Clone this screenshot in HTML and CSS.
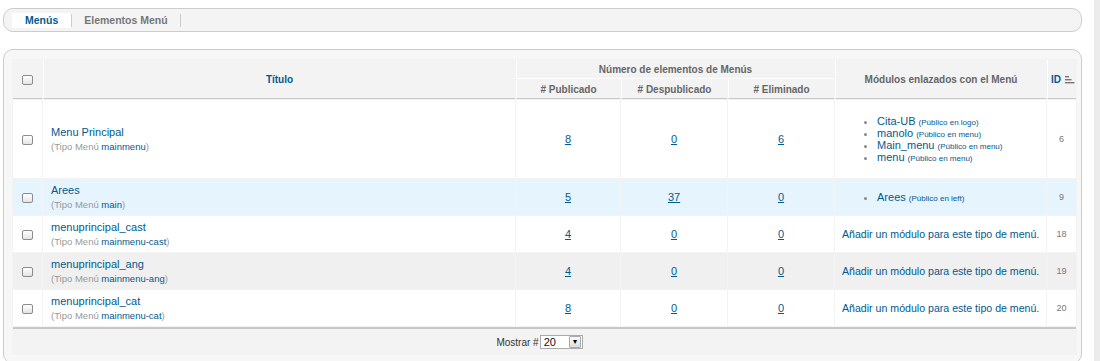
FILE: index.html
```html
<!DOCTYPE html>
<html>
<head lang="es">
    <meta charset="UTF-8">
    <title>Menús</title>
    <link rel="stylesheet" href="styles.css">
</head>
<body>

<div id="submenu-box">
    <ul id="submenu">
        <li><a class="active" href="#">Menús</a></li>
        <li><a href="#">Elementos Menú</a></li>
    </ul>
</div>

<div id="element-box">
    <table class="adminlist">
        <colgroup>
            <col style="width:29px">
            <col style="width:472px">
            <col style="width:104px">
            <col style="width:106px">
            <col style="width:106px">
            <col style="width:211px">
            <col style="width:29px">
        </colgroup>
        <thead>
        <tr>
            <th rowspan="2"><input type="checkbox" class="cb"></th>
            <th rowspan="2"><a href="#">Título</a></th>
            <th colspan="3" class="group">Número de elementos de Menús</th>
            <th rowspan="2">Módulos enlazados con el Menú</th>
            <th rowspan="2" class="id"><a href="#">ID</a>
                <svg class="sort" width="10" height="8" viewBox="0 0 10 8">
                    <rect x="0" y="0" width="4" height="1.4" fill="#777"/>
                    <rect x="0" y="3" width="6.5" height="1.4" fill="#777"/>
                    <rect x="0" y="6" width="9.5" height="1.4" fill="#777"/>
                </svg>
            </th>
        </tr>
        <tr>
            <th class="sub"># Publicado</th>
            <th class="sub"># Despublicado</th>
            <th class="sub"># Eliminado</th>
        </tr>
        </thead>
        <tbody>
        <tr class="row0">
            <td class="center"><input type="checkbox" class="cb"></td>
            <td><a class="title" href="#">Menu Principal</a><p class="smallsub">(Tipo Menú <span>mainmenu</span>)</p></td>
            <td class="center"><a class="num" href="#">8</a></td>
            <td class="center"><a class="num" href="#">0</a></td>
            <td class="center"><a class="num" href="#">6</a></td>
            <td>
                <ul class="modules big">
                    <li><a href="#">Cita-UB</a> <small>(Público en logo)</small></li>
                    <li><a href="#">manolo</a> <small>(Público en menu)</small></li>
                    <li><a href="#">Main_menu</a> <small>(Público en menu)</small></li>
                    <li><a href="#">menu</a> <small>(Público en menu)</small></li>
                </ul>
            </td>
            <td class="center idval">6</td>
        </tr>
        <tr class="row1 hover">
            <td class="center"><input type="checkbox" class="cb"></td>
            <td><a class="title" href="#">Arees</a><p class="smallsub">(Tipo Menú <span>main</span>)</p></td>
            <td class="center"><a class="num" href="#">5</a></td>
            <td class="center"><a class="num" href="#">37</a></td>
            <td class="center"><a class="num" href="#">0</a></td>
            <td>
                <ul class="modules">
                    <li><a href="#">Arees</a> <small>(Público en left)</small></li>
                </ul>
            </td>
            <td class="center idval">9</td>
        </tr>
        <tr class="row0">
            <td class="center"><input type="checkbox" class="cb"></td>
            <td><a class="title" href="#">menuprincipal_cast</a><p class="smallsub">(Tipo Menú <span>mainmenu-cast</span>)</p></td>
            <td class="center"><a class="num" href="#">4</a></td>
            <td class="center"><a class="num" href="#">0</a></td>
            <td class="center"><a class="num" href="#">0</a></td>
            <td class="addcell"><a class="add" href="#">Añadir un módulo para este tipo de menú.</a></td>
            <td class="center idval">18</td>
        </tr>
        <tr class="row1">
            <td class="center"><input type="checkbox" class="cb"></td>
            <td><a class="title" href="#">menuprincipal_ang</a><p class="smallsub">(Tipo Menú <span>mainmenu-ang</span>)</p></td>
            <td class="center"><a class="num" href="#">4</a></td>
            <td class="center"><a class="num" href="#">0</a></td>
            <td class="center"><a class="num" href="#">0</a></td>
            <td class="addcell"><a class="add" href="#">Añadir un módulo para este tipo de menú.</a></td>
            <td class="center idval">19</td>
        </tr>
        <tr class="row0">
            <td class="center"><input type="checkbox" class="cb"></td>
            <td><a class="title" href="#">menuprincipal_cat</a><p class="smallsub">(Tipo Menú <span>mainmenu-cat</span>)</p></td>
            <td class="center"><a class="num" href="#">8</a></td>
            <td class="center"><a class="num" href="#">0</a></td>
            <td class="center"><a class="num" href="#">0</a></td>
            <td class="addcell"><a class="add" href="#">Añadir un módulo para este tipo de menú.</a></td>
            <td class="center idval">20</td>
        </tr>
        </tbody>
        <tfoot>
        <tr>
            <td colspan="7">
                <div class="limit">
                    <span>Mostrar #</span>
                    <span class="select"><span class="val">20</span><span class="arrow">&#9662;</span></span>
                </div>
            </td>
        </tr>
        </tfoot>
    </table>
</div>

</body>
</html>
```

FILE: styles.css
```css
html{
    background: #fff;
}
body{
    margin: 0;
    padding: 8px 12px 0 3px;
    height: 361px;
    box-sizing: border-box;
    border-right: 6px solid #ececec;
    font-family: "Liberation Sans", Arial, sans-serif;
    font-size: 11px;
    color: #666;
}
a{
    color: #025a8d;
    text-decoration: none;
}

/* submenu */
#submenu-box{
    height: 22px;
    background: #f4f4f4;
    border: 1px solid #ccc;
    border-radius: 10px;
    padding: 0 8px;
    display: flex;
    align-items: center;
}
#submenu{
    list-style: none;
    margin: 0;
    padding: 0;
    display: flex;
    align-items: center;
}
#submenu li{
    border-right: 1px solid #ccc;
    height: 13px;
    display: flex;
    align-items: center;
}
#submenu li a{
    display: block;
    padding: 1px 12px;
    font-weight: bold;
    color: #777;
    font-size: 10.5px;
    line-height: 13px;
}
#submenu li a.active{
    background: #fff;
    color: #025a8d;
    padding: 1px 13px 1px 13px;
}

/* main box */
#element-box{
    margin-top: 17px;
    background: #f7f7f7;
    border: 1px solid #ccc;
    border-radius: 10px;
    padding: 9px 9px 8px 9px;
}
table.adminlist{
    width: 100%;
    table-layout: fixed;
    border-spacing: 1px;
    background: #f3f3f3;
    margin: 0 0 0 -1px;
}
table.adminlist th{
    background: #f3f3f3;
    color: #666;
    font-weight: bold;
    font-size: 10px;
    text-align: center;
    padding: 0 4px;
    height: 18px;
    border-left: 1px solid #fff;
}
table.adminlist th:first-child{
    border-left: 0;
}
table.adminlist th a{
    color: #025a8d;
}
table.adminlist th.group{
    border-bottom: 1px solid #fff;
}
table.adminlist thead tr:last-child th,
table.adminlist thead th[rowspan]{
    border-bottom: 1px solid #c8c8c8;
}
table.adminlist th.sub{
    border-left: 1px solid #fff;
}
table.adminlist th.id{
    text-align: left;
    padding-left: 3px;
    white-space: nowrap;
}
.sort{
    vertical-align: -1px;
    margin-left: 1px;
}

table.adminlist td{
    background: #fff;
    padding: 4px 7px 4px 8px;
    vertical-align: middle;
    height: 26px;
}
table.adminlist tr.row1 td{
    background: #f0f0f0;
}
table.adminlist tr.hover td{
    background: #e6f4fd;
}
table.adminlist td.center{
    text-align: center;
    padding-left: 4px;
    padding-right: 4px;
}
table.adminlist td.addcell{
    padding-left: 7px;
    padding-right: 0;
    white-space: nowrap;
}
.title{
    font-size: 11px;
    line-height: 14px;
}
.smallsub{
    margin: 2px 0 0 0;
    font-size: 9.5px;
    color: #999;
    line-height: 12px;
}
.smallsub span{
    color: #025a8d;
}
.num{
    text-decoration: underline;
    font-size: 11px;
}
.add{
    font-size: 10.6px;
}
.idval{
    font-size: 9px;
    color: #777;
}
ul.modules{
    margin: 6px 0 7px 0;
    padding-left: 34px;
    list-style: disc;
    color: #888;
}
ul.modules.big{
    margin: 11px 0 11px 0;
}
ul.modules li{
    font-size: 11px;
    line-height: 12px;
}
ul.modules li a{
    line-height: 12px;
}
ul.modules li small{
    font-size: 8px;
    line-height: 1;
    color: #025a8d;
}

input.cb{
    -webkit-appearance: none;
    appearance: none;
    width: 11px;
    height: 10px;
    margin: 0;
    border: 1px solid #8c8c8c;
    border-radius: 2px;
    background: linear-gradient(#fff, #e4e4e4);
    vertical-align: middle;
}

table.adminlist tfoot td{
    background: #f3f3f3;
    border-top: 2px solid #c8c8c8;
    height: 20px;
    padding: 3px 0 2px 0;
}
.limit{
    display: flex;
    justify-content: center;
    align-items: center;
    gap: 1px;
    margin-right: 10px;
    color: #333;
    font-size: 10px;
}
.select{
    display: inline-flex;
    align-items: center;
    justify-content: space-between;
    width: 43px;
    height: 14px;
    border: 1px solid #aaa;
    background: #fff;
    box-sizing: border-box;
    padding-left: 3px;
    font-size: 11px;
    color: #111;
}
.select .arrow{
    width: 10px;
    height: 10px;
    margin-right: 1px;
    border: 1px solid #aaa;
    border-radius: 1px;
    background: linear-gradient(#fafafa, #ddd);
    font-size: 8px;
    line-height: 10px;
    text-align: center;
    color: #000;
}
```
